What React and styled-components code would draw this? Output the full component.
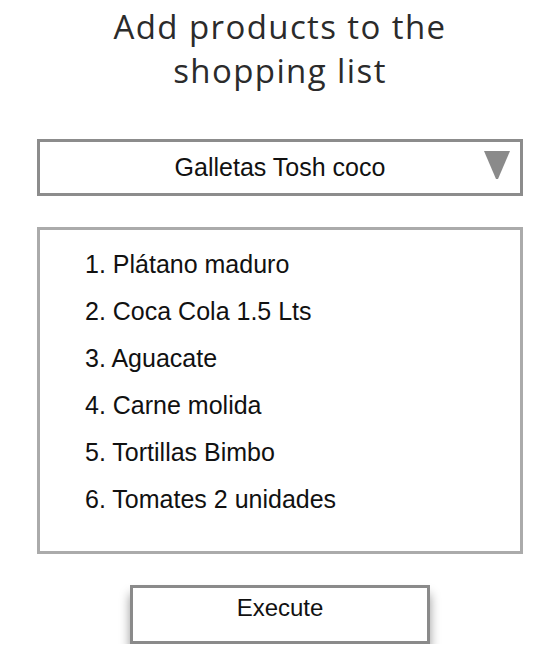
import React from "react";
import styled, { createGlobalStyle } from "styled-components";

const Global = createGlobalStyle`
  html, body { margin: 0; padding: 0; background: #ffffff; }
  body { font-family: "Liberation Sans", Arial, sans-serif; }
`;

const Page = styled.main`
  width: 486px;
  margin-left: 37px;
  display: flex;
  flex-direction: column;
  align-items: center;
`;

const Title = styled.h1`
  margin: 5px 0 0;
  font-family: "Open Sans", "Noto Sans", sans-serif;
  font-weight: 400;
  font-size: 33px;
  letter-spacing: 1.4px;
  line-height: 44px;
  color: #2b2b2b;
  text-align: center;
  width: 100%;
`;

const Select = styled.div`
  box-sizing: border-box;
  margin-top: 46px;
  width: 100%;
  height: 57px;
  border: 3px solid #8c8c8c;
  background: #fff;
  display: flex;
  align-items: center;
  justify-content: center;
  position: relative;
  font-size: 25px;
  color: #111;
`;

const Arrow = styled.svg`
  position: absolute;
  right: 9px;
  top: 7px;
`;

const ListBox = styled.ol`
  box-sizing: border-box;
  margin: 31px 0 0;
  width: 100%;
  height: 327px;
  border: 3px solid #ababab;
  padding: 11px 0 0 45px;
  list-style: none;
  font-size: 25px;
  line-height: 47px;
  color: #111;
`;

const Item = styled.li``;

const Button = styled.button`
  box-sizing: border-box;
  margin-top: 31px;
  width: 300px;
  height: 59px;
  border: 3px solid #8a8a8a;
  background: #fff;
  font-family: "Liberation Sans", Arial, sans-serif;
  font-size: 24px;
  color: #111;
  display: flex;
  justify-content: center;
  align-items: flex-start;
  padding-top: 6px;
  box-shadow: 0 9px 10px rgba(0, 0, 0, 0.4);
`;

const items = [
  "Plátano maduro",
  "Coca Cola 1.5 Lts",
  "Aguacate",
  "Carne molida",
  "Tortillas Bimbo",
  "Tomates 2 unidades",
];

export default function App() {
  return (
    <>
      <Global />
      <Page>
        <Title>
          Add products to the
          <br />
          shopping list
        </Title>
        <Select>
          Galletas Tosh coco
          <Arrow width="28" height="32" viewBox="0 0 28 32">
            <polygon points="1,2 27,2 15,30 13,30" fill="#8a8a8a" />
          </Arrow>
        </Select>
        <ListBox>
          {items.map((t, i) => (
            <Item key={i}>
              {i + 1}. {t}
            </Item>
          ))}
        </ListBox>
        <Button>Execute</Button>
      </Page>
    </>
  );
}
